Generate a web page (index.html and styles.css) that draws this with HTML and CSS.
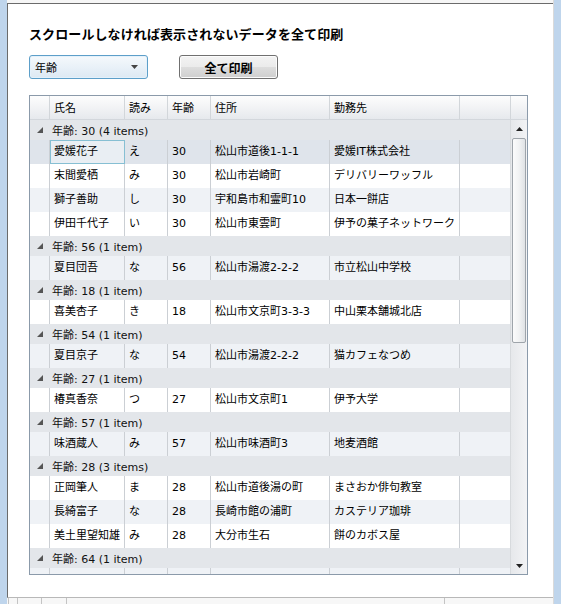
FILE: index.html
```html
<!DOCTYPE html>
<html lang="ja">
<head>
<meta charset="utf-8">
<title>印刷</title>
<link rel="stylesheet" href="styles.css">
</head>
<body>
<div class="frame">
  <div class="edge-left"></div>
  <div class="main">
    <div class="top-gap"></div>
    <div class="window">
      <h1 class="title">スクロールしなければ表示されないデータを全て印刷</h1>
      <div class="controls">
        <div class="combo"><span>年齢</span><svg class="combo-arrow" width="7" height="4" viewBox="0 0 7 4"><polygon points="0,0 7,0 3.5,4" fill="#444"/></svg></div>
        <button class="btn">全て印刷</button>
      </div>
      <div class="grid">
        <div class="head">
          <div class="hc"></div>
          <div class="hc">氏名</div>
          <div class="hc">読み</div>
          <div class="hc">年齢</div>
          <div class="hc">住所</div>
          <div class="hc">勤務先</div>
          <div class="hc"></div>
          <div class="hc corner"></div>
        </div>
        <div class="body">
          <div class="rows">
            <div class="group"><svg class="tri" width="6" height="6" viewBox="0 0 6 6"><polygon points="6,0 6,6 0,6" fill="#555"/></svg>年齢: 30 (4 items)</div>
            <div class="row sel"><div class="c"></div><div class="c focus">愛媛花子</div><div class="c">え</div><div class="c">30</div><div class="c">松山市道後1-1-1</div><div class="c">愛媛IT株式会社</div><div class="c last"></div></div>
            <div class="row"><div class="c"></div><div class="c">末間愛栖</div><div class="c">み</div><div class="c">30</div><div class="c">松山市岩崎町</div><div class="c">デリバリーワッフル</div><div class="c last"></div></div>
            <div class="row alt"><div class="c"></div><div class="c">獅子善助</div><div class="c">し</div><div class="c">30</div><div class="c">宇和島市和霊町10</div><div class="c">日本一餅店</div><div class="c last"></div></div>
            <div class="row"><div class="c"></div><div class="c">伊田千代子</div><div class="c">い</div><div class="c">30</div><div class="c">松山市東雲町</div><div class="c">伊予の菓子ネットワーク</div><div class="c last"></div></div>
            <div class="group"><svg class="tri" width="6" height="6" viewBox="0 0 6 6"><polygon points="6,0 6,6 0,6" fill="#555"/></svg>年齢: 56 (1 item)</div>
            <div class="row alt"><div class="c"></div><div class="c">夏目団吾</div><div class="c">な</div><div class="c">56</div><div class="c">松山市湯渡2-2-2</div><div class="c">市立松山中学校</div><div class="c last"></div></div>
            <div class="group"><svg class="tri" width="6" height="6" viewBox="0 0 6 6"><polygon points="6,0 6,6 0,6" fill="#555"/></svg>年齢: 18 (1 item)</div>
            <div class="row"><div class="c"></div><div class="c">喜美杏子</div><div class="c">き</div><div class="c">18</div><div class="c">松山市文京町3-3-3</div><div class="c">中山栗本舗城北店</div><div class="c last"></div></div>
            <div class="group"><svg class="tri" width="6" height="6" viewBox="0 0 6 6"><polygon points="6,0 6,6 0,6" fill="#555"/></svg>年齢: 54 (1 item)</div>
            <div class="row alt"><div class="c"></div><div class="c">夏目京子</div><div class="c">な</div><div class="c">54</div><div class="c">松山市湯渡2-2-2</div><div class="c">猫カフェなつめ</div><div class="c last"></div></div>
            <div class="group"><svg class="tri" width="6" height="6" viewBox="0 0 6 6"><polygon points="6,0 6,6 0,6" fill="#555"/></svg>年齢: 27 (1 item)</div>
            <div class="row"><div class="c"></div><div class="c">椿真香奈</div><div class="c">つ</div><div class="c">27</div><div class="c">松山市文京町1</div><div class="c">伊予大学</div><div class="c last"></div></div>
            <div class="group"><svg class="tri" width="6" height="6" viewBox="0 0 6 6"><polygon points="6,0 6,6 0,6" fill="#555"/></svg>年齢: 57 (1 item)</div>
            <div class="row alt"><div class="c"></div><div class="c">味酒蔵人</div><div class="c">み</div><div class="c">57</div><div class="c">松山市味酒町3</div><div class="c">地麦酒館</div><div class="c last"></div></div>
            <div class="group"><svg class="tri" width="6" height="6" viewBox="0 0 6 6"><polygon points="6,0 6,6 0,6" fill="#555"/></svg>年齢: 28 (3 items)</div>
            <div class="row"><div class="c"></div><div class="c">正岡筆人</div><div class="c">ま</div><div class="c">28</div><div class="c">松山市道後湯の町</div><div class="c">まさおか俳句教室</div><div class="c last"></div></div>
            <div class="row alt"><div class="c"></div><div class="c">長綺富子</div><div class="c">な</div><div class="c">28</div><div class="c">長崎市館の浦町</div><div class="c">カステリア珈琲</div><div class="c last"></div></div>
            <div class="row"><div class="c"></div><div class="c">美土里望知雄</div><div class="c">み</div><div class="c">28</div><div class="c">大分市生石</div><div class="c">餅のカボス屋</div><div class="c last"></div></div>
            <div class="group"><svg class="tri" width="6" height="6" viewBox="0 0 6 6"><polygon points="6,0 6,6 0,6" fill="#555"/></svg>年齢: 64 (1 item)</div>
            <div class="row alt"><div class="c"></div><div class="c"></div><div class="c"></div><div class="c"></div><div class="c"></div><div class="c"></div><div class="c last"></div></div>
          </div>
          <div class="scrollbar">
            <div class="sb-btn"><svg width="7" height="4" viewBox="0 0 7 4"><polygon points="3.5,0 7,4 0,4" fill="#222"/></svg></div>
            <div class="sb-track"><div class="thumb"></div></div>
            <div class="sb-btn"><svg width="7" height="4" viewBox="0 0 7 4"><polygon points="0,0 7,0 3.5,4" fill="#222"/></svg></div>
          </div>
        </div>
      </div>
    </div>
    <div class="bottom-strip">
      <span class="tick t1"></span><span class="tick t2"></span><span class="tick t3"></span><span class="tick t4"></span><span class="tick t5"></span>
    </div>
  </div>
  <div class="edge-right"></div>
</div>
</body>
</html>
```

FILE: styles.css
```css
* { box-sizing: border-box; }
html, body { margin: 0; padding: 0; }
body {
  width: 561px;
  height: 604px;
  overflow: hidden;
  background: #fff;
  font-family: "DejaVu Sans", "Noto Sans CJK JP", sans-serif;
  font-size: 11px;
  color: #000;
}
.frame { display: flex; height: 604px; }
.edge-left { width: 7px; background: #bfd5ec; }
.edge-right { width: 8px; background: #bfd5ec; border-left: 1px solid #dadada; }
.main { flex: 1; display: flex; flex-direction: column; }
.top-gap { height: 3px; background: #f6f6f6; }
.window {
  height: 595px;
  background: #fff;
  border-top: 1px solid #6b6b6b;
  border-left: 1px solid #6b6b6b;
  border-bottom: 1px solid #b8b8b8;
  padding: 21px 0 0 21px;
}
.bottom-strip { flex: 1; position: relative; background: #f7f7f7; }
.tick { position: absolute; top: 0; bottom: 0; width: 1px; background: #c4c4c4; }
.t1 { left: 1px; } .t2 { left: 10px; } .t3 { left: 34px; } .t4 { left: 59px; } .t5 { left: 437px; }

.title {
  margin: 0;
  font-family: "Noto Sans CJK JP", sans-serif;
  font-size: 13px;
  font-weight: bold;
  line-height: 18px;
  height: 18px;
  letter-spacing: 0.1px;
}
.controls { display: flex; margin-top: 12px; height: 24px; }
.combo {
  width: 119px;
  height: 24px;
  border: 1px solid #5d9fc9;
  border-radius: 3px;
  background: linear-gradient(#f5f9fc, #e9f1f8 50%, #dde9f3);
  box-shadow: inset 0 0 0 1px #e4f1fb;
  display: flex;
  align-items: center;
  justify-content: space-between;
  padding: 0 9px 0 5px;
  font-family: "Noto Sans CJK JP", sans-serif;
  font-size: 11px;
}
.combo-arrow { display: block; }
.btn {
  margin-left: 31px;
  width: 99px;
  height: 24px;
  border: 1px solid #707070;
  border-radius: 3px;
  background: linear-gradient(#f3f3f3, #ebebeb 50%, #dddddd 51%, #cfcfcf);
  box-shadow: inset 0 0 0 1px #fcfcfc;
  font-family: "Noto Sans CJK JP", sans-serif;
  font-size: 12px;
  font-weight: bold;
  color: #000;
  padding: 0;
}

.grid {
  margin-top: 16px;
  width: 499px;
  height: 480px;
  border: 1px solid #8b9aaa;
  display: flex;
  flex-direction: column;
  background: #fff;
}
.head {
  display: grid;
  grid-template-columns: 20px 75px 43px 43px 119px 130px 51px 17px;
  height: 24px;
  background: linear-gradient(#fdfdfd, #f2f3f5 50%, #e6e9ed);
  border-bottom: 1px solid #d3d7dc;
}
.hc {
  border-right: 1px solid #d2d6da;
  padding-left: 4px;
  line-height: 23px;
  font-family: "Noto Sans CJK JP", sans-serif;
  font-size: 11px;
  white-space: nowrap;
}
.hc.corner { border-right: none; }
.body { flex: 1; display: flex; overflow: hidden; }
.rows { flex: 1; overflow: hidden; }
.group {
  height: 20px;
  background: #e3e6ea;
  display: flex;
  align-items: center;
  padding-left: 7px;
  color: #111;
  white-space: nowrap;
}
.tri { margin-right: 9px; margin-top: -1px; }
.row {
  display: grid;
  grid-template-columns: 20px 75px 43px 43px 119px 130px 1fr;
  height: 24px;
  background: #fff;
}
.row.alt { background: #eff2f6; }
.row.sel { background: #dfe4eb; }
.c {
  border-right: 1px solid #cbcfd4;
  padding-left: 4px;
  line-height: 24px;
  white-space: nowrap;
  overflow: hidden;
}
.c.last { border-right: none; }
.c.focus {
  border: 1px solid #86bfd3;
  background: #e9eef3;
  padding-left: 3px;
  line-height: 22px;
}
.scrollbar {
  width: 17px;
  display: flex;
  flex-direction: column;
  background: linear-gradient(to right, #e6e8eb, #f2f3f5);
  border-left: 1px solid #d7dadd;
}
.sb-btn {
  height: 17px;
  display: flex;
  align-items: center;
  justify-content: center;
}
.sb-btn svg { display: block; }
.sb-track { flex: 1; padding: 1px 0 0 1px; }
.thumb {
  width: 14px;
  height: 205px;
  border: 1px solid #9ea4aa;
  border-radius: 2px;
  background: linear-gradient(to right, #fbfbfb, #f1f2f3 50%, #dfe2e5);
}
```
